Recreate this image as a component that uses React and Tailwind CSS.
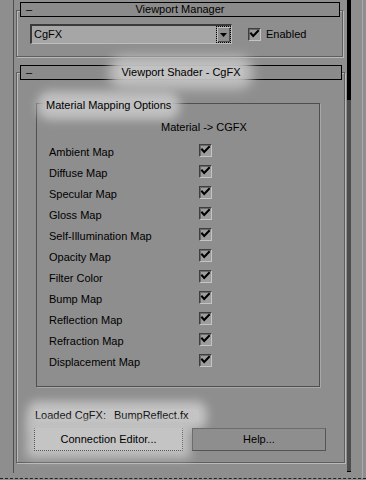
import { useState } from 'react'

const maps = [
  'Ambient Map',
  'Diffuse Map',
  'Specular Map',
  'Gloss Map',
  'Self-Illumination Map',
  'Opacity Map',
  'Filter Color',
  'Bump Map',
  'Reflection Map',
  'Refraction Map',
  'Displacement Map',
]

function Check({ checked, onClick, className = '' }) {
  return (
    <button
      onClick={onClick}
      className={`w-[13px] h-[13px] shrink-0 bg-[#9d9d9d] border-t border-l border-[#3e3e3e] border-r border-b border-r-[#c4c4c4] border-b-[#c4c4c4] shadow-[inset_1px_1px_0_#6a6a6a] flex items-center justify-center p-0 ${className}`}
    >
      {checked && (
        <svg width="11" height="11" viewBox="0 0 11 11">
          <path d="M2 4.5 L4.2 7 L9 2" fill="none" stroke="#000" strokeWidth="2" strokeLinecap="square" />
        </svg>
      )}
    </button>
  )
}

function RolloutHeader({ title, width, glow }) {
  return (
    <div className={`ml-[4px] ${width} h-[15px] border border-black bg-[#8b8b8b] flex items-center relative`}>
      <span className="w-[16px] pl-[5px] leading-none">–</span>
      <div className="flex-1 flex justify-center">
        {glow ? (
          <span className="inline-block leading-[13px] px-[2px] bg-[#c2c2c2] shadow-[0_0_12px_10px_#c0c0c0] rounded-[6px]">{title}</span>
        ) : (
          <span className="leading-[13px]">{title}</span>
        )}
      </div>
      <span className="w-[16px]" />
    </div>
  )
}

export default function App() {
  const [enabled, setEnabled] = useState(true)
  const [checks, setChecks] = useState(maps.map(() => true))

  function toggle(i) {
    setChecks(checks.map((c, j) => (j === i ? !c : c)))
  }

  return (
    <div className="w-[366px] h-[480px] bg-[#8e8e8e] overflow-hidden text-[11px] text-black font-['Liberation_Sans',Arial,sans-serif] select-none">
      <div className="flex h-[478px]">
        {/* main panel */}
        <div className="w-[347px] pl-[13px]">
          <div className="h-[473px] border-l border-[#4e4e4e] pl-[2px] pt-[2px]">
            {/* Viewport Manager rollout */}
            <RolloutHeader title="Viewport Manager" width="w-[320px]" />
            <div className="-mt-[7px] w-[327px] h-[47px] border border-[#5e5e5e] shadow-[inset_1px_1px_0_#b9b9b9,1px_1px_0_#b9b9b9] pt-[13px] pl-[13px] flex items-start">
              <div className="w-[202px] h-[20px] bg-[#a6a6a6] border-t-2 border-l-2 border-[#3a3a3a] border-r border-b border-r-[#bdbdbd] border-b-[#bdbdbd] flex items-center">
                <span className="flex-1 pl-[2px]">CgFX</span>
                <div className="w-[15px] h-[17px] bg-[#8e8e8e] border border-dotted border-black flex items-center justify-center shadow-[inset_1px_1px_0_#c0c0c0,inset_-1px_-1px_0_#505050]">
                  <svg width="7" height="4" viewBox="0 0 7 4">
                    <path d="M0 0 H7 L3.5 4 Z" fill="#000" />
                  </svg>
                </div>
              </div>
              <Check checked={enabled} onClick={() => setEnabled(!enabled)} className="ml-[16px] mt-[4px]" />
              <span className="ml-[5px] mt-[4px] leading-[13px]">Enabled</span>
            </div>

            {/* Viewport Shader rollout */}
            <div className="mt-[8px]">
              <RolloutHeader title="Viewport Shader - CgFX" width="w-[322px]" glow />
            </div>
            <div className="-mt-[8px] w-[329px] h-[391px] border border-[#5e5e5e] shadow-[inset_1px_1px_0_#b9b9b9,1px_1px_0_#b9b9b9] pt-[30px] pl-[19px]">
              {/* group box */}
              <div className="w-[284px] h-[284px] border border-[#4f4f4f] shadow-[1px_1px_0_#a8a8a8]">
                <div className="-mt-[7px] ml-[8px] h-[13px]">
                  <span className="inline-block leading-[13px] px-[1px] bg-[#c0c0c0] shadow-[0_0_10px_8px_#c0c0c0] rounded-[6px]">Material Mapping Options</span>
                </div>
                <div className="mt-[11px] pl-[124px] leading-[13px]">Material -&gt; CGFX</div>
                <div className="mt-[7px] pl-[12px]">
                  {maps.map((m, i) => (
                    <div key={m} className="h-[21px] flex items-center">
                      <span className="w-[150px] leading-[13px] pt-[1px]">{m}</span>
                      <Check checked={checks[i]} onClick={() => toggle(i)} className="-mt-[3px]" />
                    </div>
                  ))}
                </div>
              </div>

              {/* loaded + buttons */}
              <div className="mt-[22px] -ml-[1px] flex">
                <span className="inline-block leading-[13px] bg-[#c4c4c4] shadow-[0_0_10px_8px_#c2c2c2] w-[164px] rounded-[4px]">
                  Loaded CgFX:<span className="ml-[8px]">BumpReflect.fx</span>
                </span>
              </div>
              <div className="mt-[6px] -ml-[2px] flex gap-[9px]">
                <button className="w-[149px] h-[23px] bg-[#c4c4c4] shadow-[0_0_10px_7px_#c2c2c2] border border-dotted border-[#555] border-r-solid border-r-[#6a6a6a] border-t-[#c4c4c4]">
                  Connection Editor...
                </button>
                <button className="w-[134px] h-[23px] bg-[#8e8e8e] border border-[#555] border-t-[#6c6c6c] border-l-[#6c6c6c]">
                  Help...
                </button>
              </div>
            </div>
          </div>
        </div>

        {/* scrollbar */}
        <div className="w-[4px] h-[472px] flex flex-col">
          <div className="h-[100px] bg-black" />
          <div className="flex-1 bg-[#4d4d4d] border-b border-black" />
        </div>

        {/* right edge */}
        <div className="flex-1 pl-[11px]">
          <div className="w-px h-full bg-[#a9a9a9]" />
        </div>
      </div>
      <div className="h-px border-t border-dashed border-[#222]" />
    </div>
  )
}
